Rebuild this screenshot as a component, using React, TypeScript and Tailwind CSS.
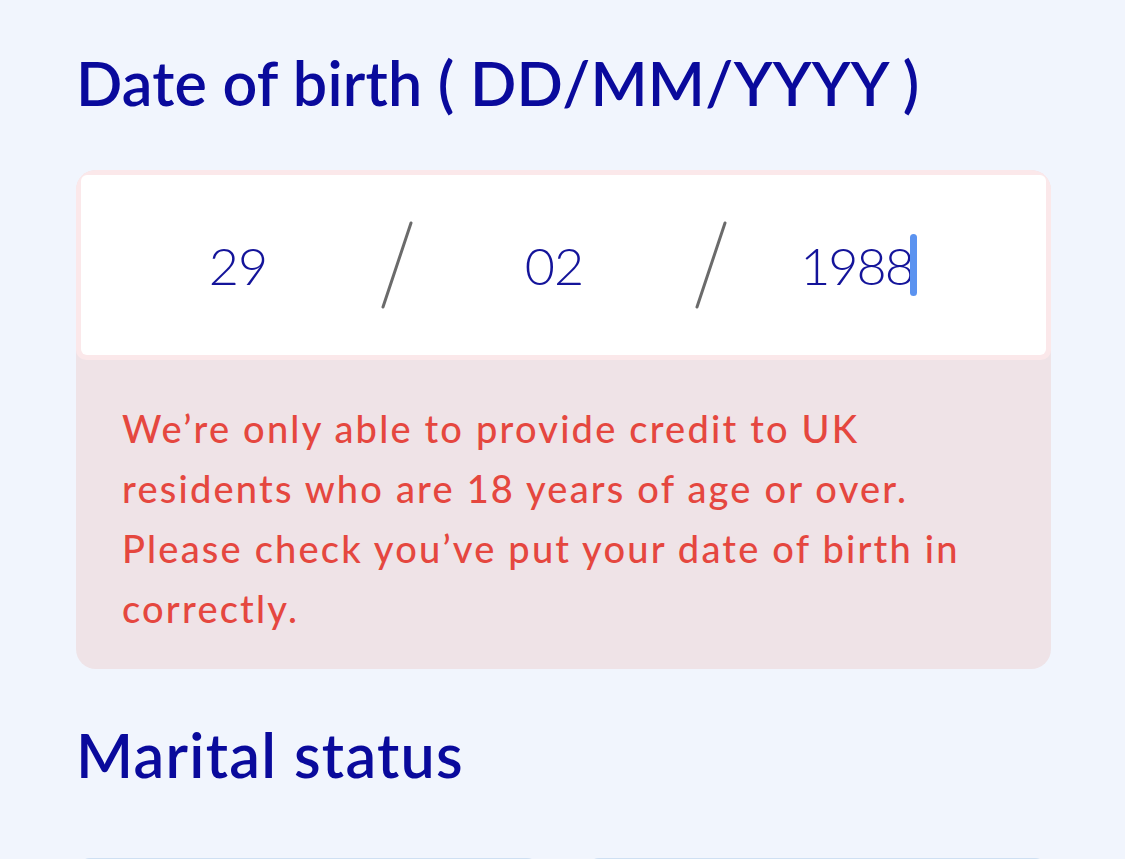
import React from 'react';

function Slash() {
  return (
    <svg width="32" height="88" viewBox="0 0 32 88" className="shrink-0">
      <line x1="30" y1="2" x2="2" y2="86" stroke="#6b6b6b" strokeWidth="3" strokeLinecap="round" />
    </svg>
  );
}

export default function App() {
  const font = { fontFamily: 'Lato, "Noto Sans", sans-serif' };

  return (
    <main className="w-[1125px] h-[859px] overflow-hidden bg-[#f1f5fd]" style={font}>
      <div className="pl-[76px] pr-[75px] pt-[46px]">
        {/* Date of birth */}
        <h2 className="text-[61px] leading-[73px] font-semibold text-[#0a0a9c] tracking-[0.2px]">
          Date of birth ( DD/MM/YYYY )
        </h2>

        <div className="mt-[51px] w-[975px] rounded-[20px] bg-[#efe3e7] overflow-hidden">
          <div className="rounded-[10px] bg-[#fbe8ea] p-[5px]">
            <div className="h-[180px] rounded-[6px] bg-white flex items-center text-[52px] font-light text-[#14149a] tracking-[-1px]">
              <div className="w-[300px] text-center pl-[14px]">29</div>
              <Slash />
              <div className="w-[282px] text-center">02</div>
              <Slash />
              <div className="flex-1 flex items-center justify-center pr-[56px]">
                <span className="tracking-[-2px]">1988</span>
                <span className="ml-[-3px] w-[7px] h-[62px] rounded-full bg-[#5b93f0]" />
              </div>
            </div>
          </div>
          <p className="pl-[46px] pr-[40px] pt-[38px] pb-[31px] text-[38px] leading-[60px] font-medium text-[#e5473f] tracking-[2.2px]">
            We’re only able to provide credit to UK residents who are 18 years of age or over. Please check you’ve put your date of birth in correctly.
          </p>
        </div>

        {/* Marital status */}
        <h2 className="mt-[49px] text-[61px] leading-[73px] font-semibold text-[#0a0a9c] tracking-[1.3px]">
          Marital status
        </h2>

        <div className="mt-[67px] flex gap-[48px] pl-[2px] pr-[3px]">
          <div className="h-[80px] flex-1 rounded-[12px] border-2 border-[#cfe0f3] bg-white" />
          <div className="h-[80px] flex-1 rounded-[12px] border-2 border-[#cfe0f3] bg-white" />
        </div>
      </div>
    </main>
  );
}
